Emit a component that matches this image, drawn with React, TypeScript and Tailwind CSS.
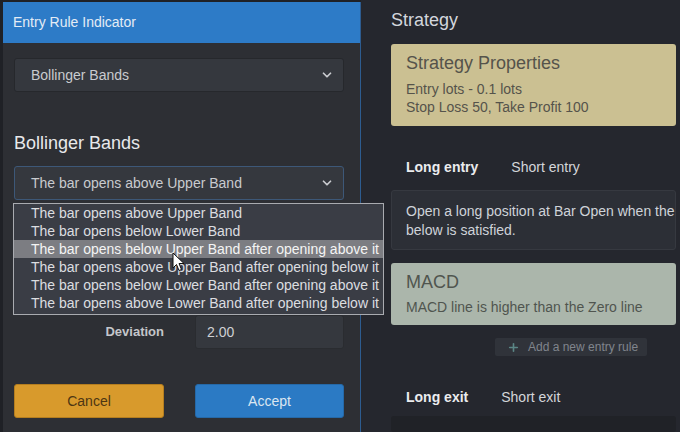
import { ChevronDown, Plus } from "lucide-react";

const options = [
  "The bar opens above Upper Band",
  "The bar opens below Lower Band",
  "The bar opens below Upper Band after opening above it",
  "The bar opens above Upper Band after opening below it",
  "The bar opens below Lower Band after opening above it",
  "The bar opens above Lower Band after opening below it",
];

function SelectBox({ value, focused }: { value: string; focused?: boolean }) {
  return (
    <div
      className={`flex h-[34px] w-[330px] items-center justify-between rounded-[3px] border bg-[#35383e] pl-[16px] pr-[9px] text-[14px] text-[#c9cbcf] ${
        focused ? "border-[#3d5878]" : "border-[#26282c]"
      }`}
    >
      <span>{value}</span>
      <ChevronDown className="h-[14px] w-[14px] text-[#c9cbcf]" strokeWidth={3} />
    </div>
  );
}

function FieldRow({ label, value }: { label: string; value: string }) {
  return (
    <div className="flex items-center">
      <div className="w-[150px] text-right text-[13px] font-bold text-[#c4c6ca]">{label}</div>
      <div className="ml-[31px] flex h-[34px] w-[149px] items-center rounded-[3px] border border-[#2a2c30] bg-[#35383e] pl-[11px] text-[14px] text-[#cfd1d4]">
        {value}
      </div>
    </div>
  );
}

function EntryRuleModal() {
  return (
    <div className="relative ml-[3px] mt-[2px] flex h-[430px] w-[358px] flex-col border-r border-[#2d5c90] bg-[#2d2f34]">
      <div className="flex h-[41px] items-center bg-[#2d7bc7] px-[10px] text-[14px] text-[#e4ecf5]">
        Entry Rule Indicator
      </div>
      <div className="flex flex-col px-[11px]">
        <div className="mt-[15px]">
          <SelectBox value="Bollinger Bands" />
        </div>
        <div className="mt-[40px] text-[18px] leading-[22px] text-[#e8e9eb]">Bollinger Bands</div>
        <div className="mt-[12px]">
          <SelectBox value="The bar opens above Upper Band" focused />
        </div>
        <div className="mt-[115px]">
          <FieldRow label="Deviation" value="2.00" />
        </div>
        <div className="mt-[35px] flex gap-[31px]">
          <button className="h-[34px] w-[150px] rounded-[3px] border border-[#b57e1f] bg-[#d89a2c] text-[14px] text-[#4d3613]">
            Cancel
          </button>
          <button className="h-[34px] w-[149px] rounded-[3px] border border-[#2569a8] bg-[#2b7ac4] text-[14px] text-[#dbe6f1]">
            Accept
          </button>
        </div>
      </div>

      {/* open dropdown list */}
      <div className="absolute left-[10px] top-[201px] z-10 w-[371px] border border-[#a9abb0] bg-[#3a3d45] pb-[2px]">
        {options.map((o, i) => (
          <div
            key={o}
            className={`h-[18px] whitespace-nowrap pl-[17px] text-[14px] leading-[18px] ${
              i === 2 ? "bg-[#7c7d82] text-[#f4f4f4]" : "text-[#dcdde0]"
            }`}
          >
            {o}
          </div>
        ))}
      </div>

      {/* mouse pointer */}
      <svg
        className="absolute left-[169px] top-[250px] z-20"
        width="14"
        height="20"
        viewBox="0 0 14 20"
      >
        <path
          d="M1 1 L1 16 L4.5 12.5 L7 18.5 L9.5 17.5 L7 11.5 L12 11.5 Z"
          fill="#ffffff"
          stroke="#111111"
          strokeWidth="1"
          strokeLinejoin="round"
        />
      </svg>
    </div>
  );
}

function StrategyPanel() {
  return (
    <div className="flex h-[432px] flex-1 flex-col overflow-hidden bg-[#25272e] pl-[30px] pr-[4px]">
      <div className="mt-[9px] text-[18px] leading-[22px] text-[#d3d6dd]">Strategy</div>

      <div className="mt-[13px] rounded-[3px] bg-[#cbc092] pb-[10px] pl-[15px] pt-[8px] text-[#55534b]">
        <div className="text-[18px] leading-[22px]">Strategy Properties</div>
        <div className="mt-[6px] text-[14px] leading-[18px]">Entry lots - 0.1 lots</div>
        <div className="text-[14px] leading-[18px]">Stop Loss 50, Take Profit 100</div>
      </div>

      <div className="mt-[32px] flex gap-[33px] pl-[15px] text-[14px] leading-[18px]">
        <span className="font-bold text-[#ebecee]">Long entry</span>
        <span className="text-[#d4d6da]">Short entry</span>
      </div>

      <div className="mt-[14px] rounded-[3px] border border-[#363940] bg-[#2c2f36] pb-[9px] pl-[14px] pt-[11px] text-[14px] leading-[19px] text-[#cfd3d9]">
        <div className="whitespace-nowrap">Open a long position at Bar Open when the</div>
        <div>below is satisfied.</div>
      </div>

      <div className="mt-[13px] rounded-[3px] bg-[#abb6ab] pb-[9px] pl-[15px] pt-[8px] text-[#50554f]">
        <div className="text-[18px] leading-[22px]">MACD</div>
        <div className="mt-[5px] whitespace-nowrap text-[14px] leading-[18px]">MACD line is higher than the Zero line</div>
      </div>

      <div className="ml-[104px] mt-[13px] flex h-[29px] w-[152px] items-center gap-[8px] rounded-[2px] bg-[#30333a] pl-[12px] text-[12px] text-[#80858d]">
        <Plus className="h-[13px] w-[13px] text-[#5b8686]" strokeWidth={3} />
        <span>Add a new entry rule</span>
      </div>

      <div className="mt-[32px] flex gap-[33px] pl-[15px] text-[14px] leading-[18px]">
        <span className="font-bold text-[#ebecee]">Long exit</span>
        <span className="text-[#d4d6da]">Short exit</span>
      </div>

      <div className="mt-[10px] h-[40px] rounded-[3px] bg-[#202227]" />
    </div>
  );
}

export default function App() {
  return (
    <div
      className="flex h-[432px] w-[680px] overflow-hidden bg-[#1f2126]"
      style={{ fontFamily: '"Liberation Sans", Arial, sans-serif' }}
    >
      <EntryRuleModal />
      <StrategyPanel />
    </div>
  );
}
